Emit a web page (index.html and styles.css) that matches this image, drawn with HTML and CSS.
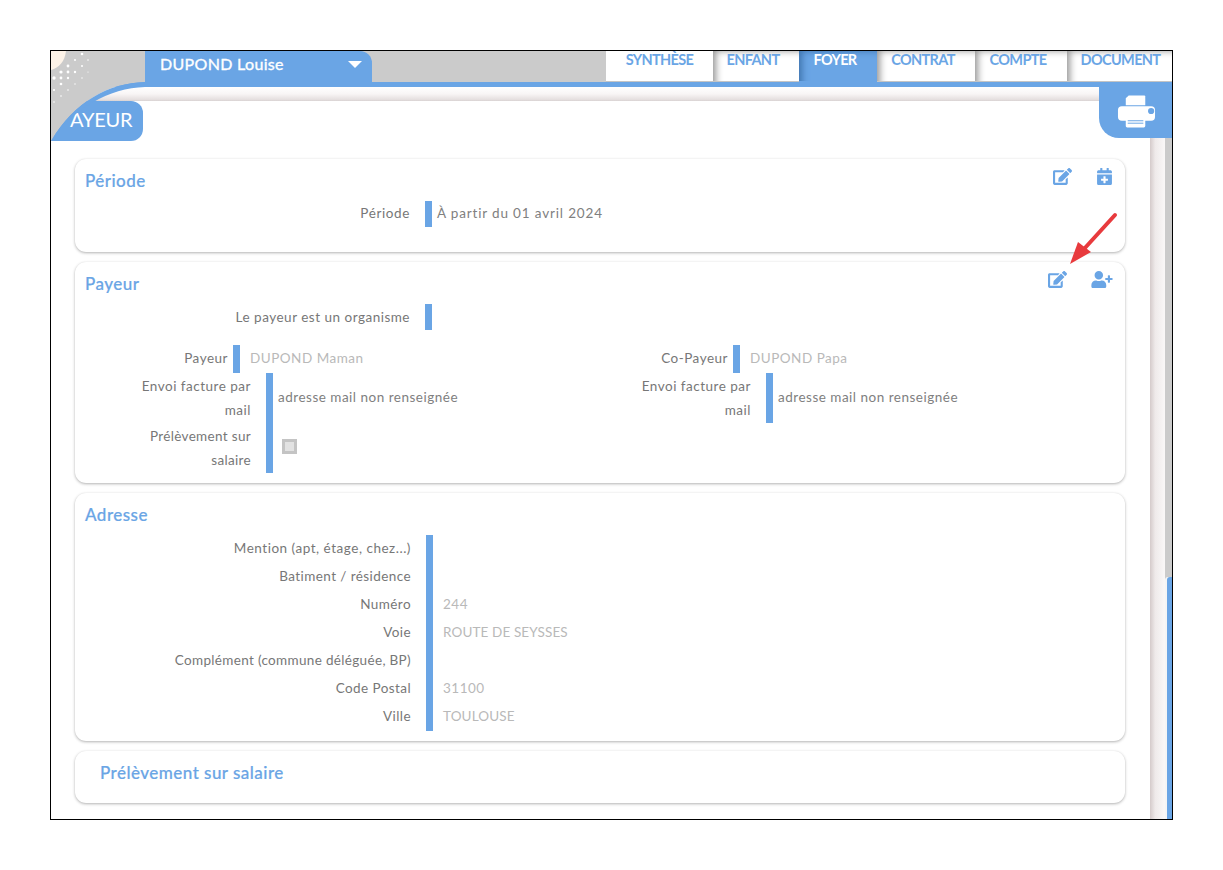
FILE: index.html
```html
<!DOCTYPE html>
<html lang="fr">
<head>
<meta charset="utf-8">
<title>Payeur</title>
<link rel="stylesheet" href="styles.css">
</head>
<body>
<div class="frame">
  <header class="topbar">
    <div class="child-select"><span>DUPOND Louise</span><i class="caret"></i></div>
    <nav class="tabs">
      <a class="tab t1">SYNTHÈSE</a>
      <a class="tab t2">ENFANT</a>
      <a class="tab t3 active">FOYER</a>
      <a class="tab t4">CONTRAT</a>
      <a class="tab t5">COMPTE</a>
      <a class="tab t6">DOCUMENT</a>
    </nav>
  </header>
  <div class="blue-strip"></div>
  <div class="body">
    <div class="panel-wrap">
      <div class="shade-band"></div>
      <main class="panel">
        <section class="card c1">
          <div class="card-head">
            <h2>Période</h2>
            <div class="icons i1">
              <svg class="ic-edit" viewBox="0 0 576 512"><path d="M402.6 83.2l90.2 90.2c3.8 3.8 3.8 10 0 13.8L274.4 405.6l-92.8 10.3c-12.4 1.4-22.9-9.1-21.5-21.5l10.3-92.8L388.8 83.2c3.8-3.8 10-3.8 13.8 0zm162-22.9l-48.8-48.8c-15.2-15.2-39.9-15.2-55.2 0l-35.4 35.4c-3.8 3.8-3.8 10 0 13.8l90.2 90.2c3.8 3.8 10 3.8 13.8 0l35.4-35.4c15.2-15.3 15.2-40 0-55.2zM384 346.2V448H64V128h229.8c3.2 0 6.2-1.3 8.5-3.5l40-40c7.6-7.6 2.2-20.5-8.5-20.5H48C21.5 64 0 85.5 0 112v352c0 26.5 21.5 48 48 48h352c26.5 0 48-21.5 48-48V306.2c0-10.7-12.9-16-20.5-8.5l-40 40c-2.2 2.3-3.5 5.3-3.5 8.5z"/></svg>
              <svg class="ic-cal" viewBox="0 0 448 512"><path d="M436 160H12c-6.6 0-12-5.4-12-12v-36c0-26.5 21.5-48 48-48h48V12c0-6.6 5.4-12 12-12h40c6.6 0 12 5.4 12 12v52h128V12c0-6.6 5.4-12 12-12h40c6.6 0 12 5.4 12 12v52h48c26.5 0 48 21.5 48 48v36c0 6.6-5.4 12-12 12zM12 192h424c6.6 0 12 5.4 12 12v260c0 26.5-21.5 48-48 48H48c-26.5 0-48-21.5-48-48V204c0-6.6 5.4-12 12-12zm316 140c0-6.6-5.4-12-12-12h-60v-60c0-6.6-5.4-12-12-12h-40c-6.6 0-12 5.4-12 12v60h-60c-6.6 0-12 5.4-12 12v40c0 6.6 5.4 12 12 12h60v60c0 6.6 5.4 12 12 12h40c6.6 0 12-5.4 12-12v-60h60c6.6 0 12-5.4 12-12v-40z"/></svg>
            </div>
          </div>
          <div class="row single period">
            <span class="lbl wide-text">Période</span><b class="bar"></b><span class="val dark wider-text">À partir du 01 avril 2024</span>
          </div>
        </section>

        <section class="card c2">
          <div class="card-head">
            <h2>Payeur</h2>
            <div class="icons i2">
              <svg class="ic-edit" viewBox="0 0 576 512"><path d="M402.6 83.2l90.2 90.2c3.8 3.8 3.8 10 0 13.8L274.4 405.6l-92.8 10.3c-12.4 1.4-22.9-9.1-21.5-21.5l10.3-92.8L388.8 83.2c3.8-3.8 10-3.8 13.8 0zm162-22.9l-48.8-48.8c-15.2-15.2-39.9-15.2-55.2 0l-35.4 35.4c-3.8 3.8-3.8 10 0 13.8l90.2 90.2c3.8 3.8 10 3.8 13.8 0l35.4-35.4c15.2-15.3 15.2-40 0-55.2zM384 346.2V448H64V128h229.8c3.2 0 6.2-1.3 8.5-3.5l40-40c7.6-7.6 2.2-20.5-8.5-20.5H48C21.5 64 0 85.5 0 112v352c0 26.5 21.5 48 48 48h352c26.5 0 48-21.5 48-48V306.2c0-10.7-12.9-16-20.5-8.5l-40 40c-2.2 2.3-3.5 5.3-3.5 8.5z"/></svg>
              <svg class="ic-user" viewBox="0 0 640 512"><path d="M624 208h-64v-64c0-8.8-7.2-16-16-16h-32c-8.8 0-16 7.2-16 16v64h-64c-8.8 0-16 7.2-16 16v32c0 8.8 7.2 16 16 16h64v64c0 8.8 7.2 16 16 16h32c8.8 0 16-7.2 16-16v-64h64c8.8 0 16-7.2 16-16v-32c0-8.8-7.2-16-16-16zm-400 48c70.7 0 128-57.3 128-128S294.7 0 224 0 96 57.3 96 128s57.3 128 128 128zm89.6 32h-16.7c-22.2 10.2-46.9 16-72.9 16s-50.6-5.8-72.9-16h-16.7C60.2 288 0 348.2 0 422.4V464c0 26.5 21.5 48 48 48h352c26.5 0 48-21.5 48-48v-41.6c0-74.2-60.2-134.4-134.4-134.4z"/></svg>
            </div>
          </div>
          <div class="row single org">
            <span class="lbl">Le payeur est un organisme</span><b class="bar"></b>
          </div>
          <div class="payers">
            <div class="payer">
              <div class="row name"><span class="lbl">Payeur</span><b class="bar"></b><span class="val light">DUPOND Maman</span></div>
              <div class="row wrap"><span class="lbl">Envoi facture par mail</span><b class="bar"></b><span class="val dark">adresse mail non renseignée</span></div>
              <div class="row wrap"><span class="lbl tight-text">Prélèvement sur salaire</span><b class="bar"></b><span class="check"></span></div>
            </div>
            <div class="payer">
              <div class="row name"><span class="lbl">Co-Payeur</span><b class="bar"></b><span class="val light">DUPOND Papa</span></div>
              <div class="row wrap"><span class="lbl">Envoi facture par mail</span><b class="bar"></b><span class="val dark">adresse mail non renseignée</span></div>
            </div>
          </div>
        </section>

        <section class="card c3">
          <div class="card-head"><h2>Adresse</h2></div>
          <div class="addr">
            <div class="row line"><span class="lbl mid-text">Mention (apt, étage, chez...)</span><b class="bar"></b><span class="val light"></span></div>
            <div class="row line"><span class="lbl">Batiment / résidence</span><b class="bar"></b><span class="val light"></span></div>
            <div class="row line"><span class="lbl">Numéro</span><b class="bar"></b><span class="val light">244</span></div>
            <div class="row line"><span class="lbl">Voie</span><b class="bar"></b><span class="val light caps">ROUTE DE SEYSSES</span></div>
            <div class="row line"><span class="lbl tight-text">Complément (commune déléguée, BP)</span><b class="bar"></b><span class="val light"></span></div>
            <div class="row line"><span class="lbl">Code Postal</span><b class="bar"></b><span class="val light">31100</span></div>
            <div class="row line"><span class="lbl">Ville</span><b class="bar"></b><span class="val light caps">TOULOUSE</span></div>
          </div>
        </section>

        <section class="card c4">
          <div class="card-head"><h2>Prélèvement sur salaire</h2></div>
        </section>
      </main>
    </div>
    <div class="gutter"></div>
    <div class="scrollbar"><div class="thumb"></div></div>
  </div>

  <div class="page-title">AYEUR</div>
  <svg class="corner" viewBox="0 0 94 91">
    <path class="corner-gray" d="M0 0H94V31C58 32 24 50 0 90Z"/>
    <path class="corner-blue" d="M94 31C58 32 24 50 0 90C22 58 58 37 94 36Z"/>
    <path class="corner-peach" d="M0 0H15C14 10 8 17 0 19Z"/>
    <g class="dots">
      <circle cx="31" cy="3" r="1.3"/>
      <circle cx="24" cy="9" r="1"/><circle cx="37" cy="9" r=".8"/>
      <circle cx="17" cy="15" r="1.4"/><circle cx="31" cy="15" r="1"/>
      <circle cx="10" cy="21" r="1.6"/><circle cx="17" cy="21" r="1.4"/><circle cx="24" cy="21" r="1.2"/><circle cx="37" cy="21" r=".6"/>
      <circle cx="3" cy="27" r="1.7"/><circle cx="10" cy="27" r="1.4"/><circle cx="17" cy="27" r="1.2"/><circle cx="31" cy="27" r=".7"/>
      <circle cx="10" cy="33" r="1.3"/><circle cx="24" cy="33" r=".7"/>
      <circle cx="3" cy="39" r="1.1"/><circle cx="17" cy="39" r=".8"/>
      <circle cx="10" cy="45" r=".8"/><circle cx="3" cy="51" r=".8"/>
    </g>
  </svg>

  <button class="print" aria-label="Imprimer">
    <svg viewBox="0 0 40 36">
      <path class="pr-w" d="M12 2H28a1 1 0 0 1 1 1V12H9V5Z"/>
      <rect class="pr-w" x="1" y="13" width="38" height="15" rx="4"/>
      <circle class="pr-b" cx="35" cy="18" r="3.2"/>
      <rect class="pr-w" x="9" y="25" width="20" height="10" rx="1.5"/>
      <rect class="pr-b" x="11" y="27.5" width="16" height="1"/>
      <rect class="pr-b" x="11" y="30" width="16" height="1"/>
    </svg>
  </button>

  <svg class="arrow" viewBox="0 0 50 56">
    <path d="M45 3 L14 37" />
    <polygon points="0,52 8,30 21,40"/>
  </svg>
</div>
</body>
</html>
```
FILE: styles.css
```css
* { box-sizing: border-box; }
html, body { margin: 0; padding: 0; background: #fff; }
body { padding: 50px 0 0 50px; font-family: "Lato", "Open Sans", sans-serif; color: #777; }

.frame {
  position: relative;
  width: 1123px;
  height: 770px;
  border: 1px solid #000;
  display: flex;
  flex-direction: column;
  overflow: hidden;
  background: #fff;
}

/* top bar */
.topbar {
  height: 31px;
  flex: none;
  display: flex;
  justify-content: space-between;
  background: #cbcbcb;
  padding-left: 94px;
}
.child-select {
  width: 227px;
  height: 31px;
  background: #6aa5e5;
  border-top-right-radius: 12px;
  color: #fff;
  font-size: 16px;
  font-weight: 400;
  letter-spacing: .32px;
  -webkit-text-stroke: .35px #fff;
  padding: 2px 10px 0 15px;
  display: flex;
  justify-content: space-between;
  align-items: flex-start;
}
.child-select span { line-height: 21px; }
.caret {
  margin-top: 8px;
  border-left: 7px solid transparent;
  border-right: 7px solid transparent;
  border-top: 7px solid #fff;
}
.tabs { display: flex; height: 31px; }
.tab {
  background: #fff;
  color: #6aa5e5;
  font-size: 14.5px;
  font-weight: 700;
  letter-spacing: -.65px;
  line-height: 18px;
  text-align: center;
  padding-right: 6px;
  border-bottom: 1px solid #c4c4c4;
  box-shadow: inset 9px 6px 7px -6px #979797;
}
.t1 { width: 107px; box-shadow: none; padding-right: 0; }
.t2 { width: 86px; }
.t3 { width: 78px; }
.t4 { width: 98px; }
.t5 { width: 92px; }
.t6 { width: 105px; padding-right: 0; padding-left: 2px; }
.tab.active { background: #6aa5e5; color: #fff; border-bottom-color: #6aa5e5; box-shadow: inset 9px 6px 7px -6px #3f74ad; }

.blue-strip { height: 5px; flex: none; background: #6aa5e5; }

/* body */
.body { flex: 1; min-height: 0; display: flex; }
.panel-wrap { display: flex; flex-direction: column; flex: none; width: 1099px; }
.shade-band {
  height: 14px;
  flex: none;
  background: linear-gradient(#fff 0, #f8f5f5 50%, #e2dcdc 95%, #cfc8c8 100%);
}
.panel {
  flex: 1;
  min-height: 0;
  padding: 58px 25px 0 24px;
  background: #fff;
  border-bottom-right-radius: 6px;
}
.gutter {
  width: 15px;
  flex: none;
  background: linear-gradient(90deg, #d4caca 0, #efeaea 35%, #faf8f8 100%);
}
.scrollbar {
  width: 7px;
  flex: none;
  background: #cbcbcb;
  padding-top: 490px;
}
.thumb {
  height: 260px;
  margin-left: 2px;
  background: #6aa5e5;
  border-top-left-radius: 3px;
  box-shadow: -2px 0 0 #f5f5f5;
}

/* cards */
.card {
  border-radius: 11px;
  background: #fff;
  box-shadow: 0 1px 3px rgba(0,0,0,.3), 0 0 1px rgba(0,0,0,.06);
  margin-bottom: 10px;
  padding: 0 10px;
}
.c1 { height: 93px; }
.c2 { height: 221px; }
.c3 { height: 248px; }
.c4 { height: 52px; padding-left: 25px; }
.card-head { display: flex; justify-content: space-between; height: 42px; }
.card h2 {
  margin: 12px 0 0;
  font-size: 17px;
  font-weight: 500;
  line-height: 20px;
  color: #6aa5e5;
  letter-spacing: .47px;
  -webkit-text-stroke: .2px #6aa5e5;
}
.icons { display: flex; align-items: flex-start; fill: #6aa5e5; padding-top: 9px; }
.icons svg { display: block; height: 17px; }
.i1 { gap: 25px; padding-right: 3px; }
.i1 .ic-edit { width: 19px; }
.i1 .ic-cal { width: 15px; }
.i2 { gap: 24px; padding-right: 2px; }
.i2 .ic-edit { width: 19px; }
.i2 .ic-user { width: 22px; }

/* rows */
.row { display: flex; font-size: 13.5px; letter-spacing: .5px; }
.lbl { text-align: right; flex: none; color: #777; }
.bar { display: block; flex: none; width: 7px; background: #6aa5e5; }
.val { display: block; }
.val.dark { color: #808080; }
.val.light { color: #b9b9b9; }
.line .lbl { letter-spacing: .42px; }
.lbl.wide-text { letter-spacing: .62px; }
.val.wider-text { letter-spacing: .84px; }
.line .lbl.mid-text { letter-spacing: .52px; }
.row .lbl.tight-text { letter-spacing: .33px; }
.val.caps { letter-spacing: .12px; }

.single { height: 26px; align-items: stretch; }
.single .lbl { width: 325px; line-height: 26px; margin-right: 15px; }
.single .val { line-height: 26px; margin-left: 5px; }
.period .lbl, .period .val { line-height: 24px; }
.org { margin-bottom: 15px; }

.payers { display: flex; }
.payer { width: 500px; }
.name { height: 28px; }
.name .lbl { width: 143px; margin-right: 5px; line-height: 26px; }
.name .val { margin-left: 10px; line-height: 26px; }
.wrap { height: 50px; }
.wrap .lbl { width: 166px; padding-left: 40px; margin-right: 15px; line-height: 24px; margin-top: 1px; }
.wrap .val { margin-left: 5px; line-height: 48px; }
.check {
  width: 15px;
  height: 15px;
  margin: 16px 0 0 9px;
  background: #e2e2e2;
  border: 3px solid #c4c4c4;
}
.line { height: 28px; }
.line .lbl { width: 326px; margin-right: 15px; line-height: 26px; }
.line .val { margin-left: 10px; line-height: 26px; }

/* overlays */
.page-title {
  position: absolute;
  left: 0;
  top: 50px;
  width: 92px;
  height: 40px;
  background: #6aa5e5;
  border-radius: 0 12px 12px 0;
  color: #fff;
  font-size: 20px;
  letter-spacing: -.2px;
  line-height: 36px;
  padding-left: 19px;
}
.corner { position: absolute; left: 0; top: 0; width: 94px; height: 91px; }
.corner-gray { fill: #cbcbcb; }
.corner-blue { fill: #6aa5e5; }
.corner-peach { fill: #fdf3e8; }
.dots circle { fill: #fff; }

.print {
  position: absolute;
  right: 0;
  top: 31px;
  width: 73px;
  height: 56px;
  padding: 11px 0 9px 18px;
  border: 0;
  background: #6aa5e5;
  border-bottom-left-radius: 20px;
}
.print svg { display: block; width: 39px; height: 36px; }
.pr-w { fill: #fff; }
.pr-b { fill: #6aa5e5; }

.arrow { position: absolute; left: 1019px; top: 161px; width: 50px; height: 56px; }
.arrow path { fill: none; stroke: #e83a3d; stroke-width: 4; stroke-linecap: round; }
.arrow polygon { fill: #e83a3d; }
```
